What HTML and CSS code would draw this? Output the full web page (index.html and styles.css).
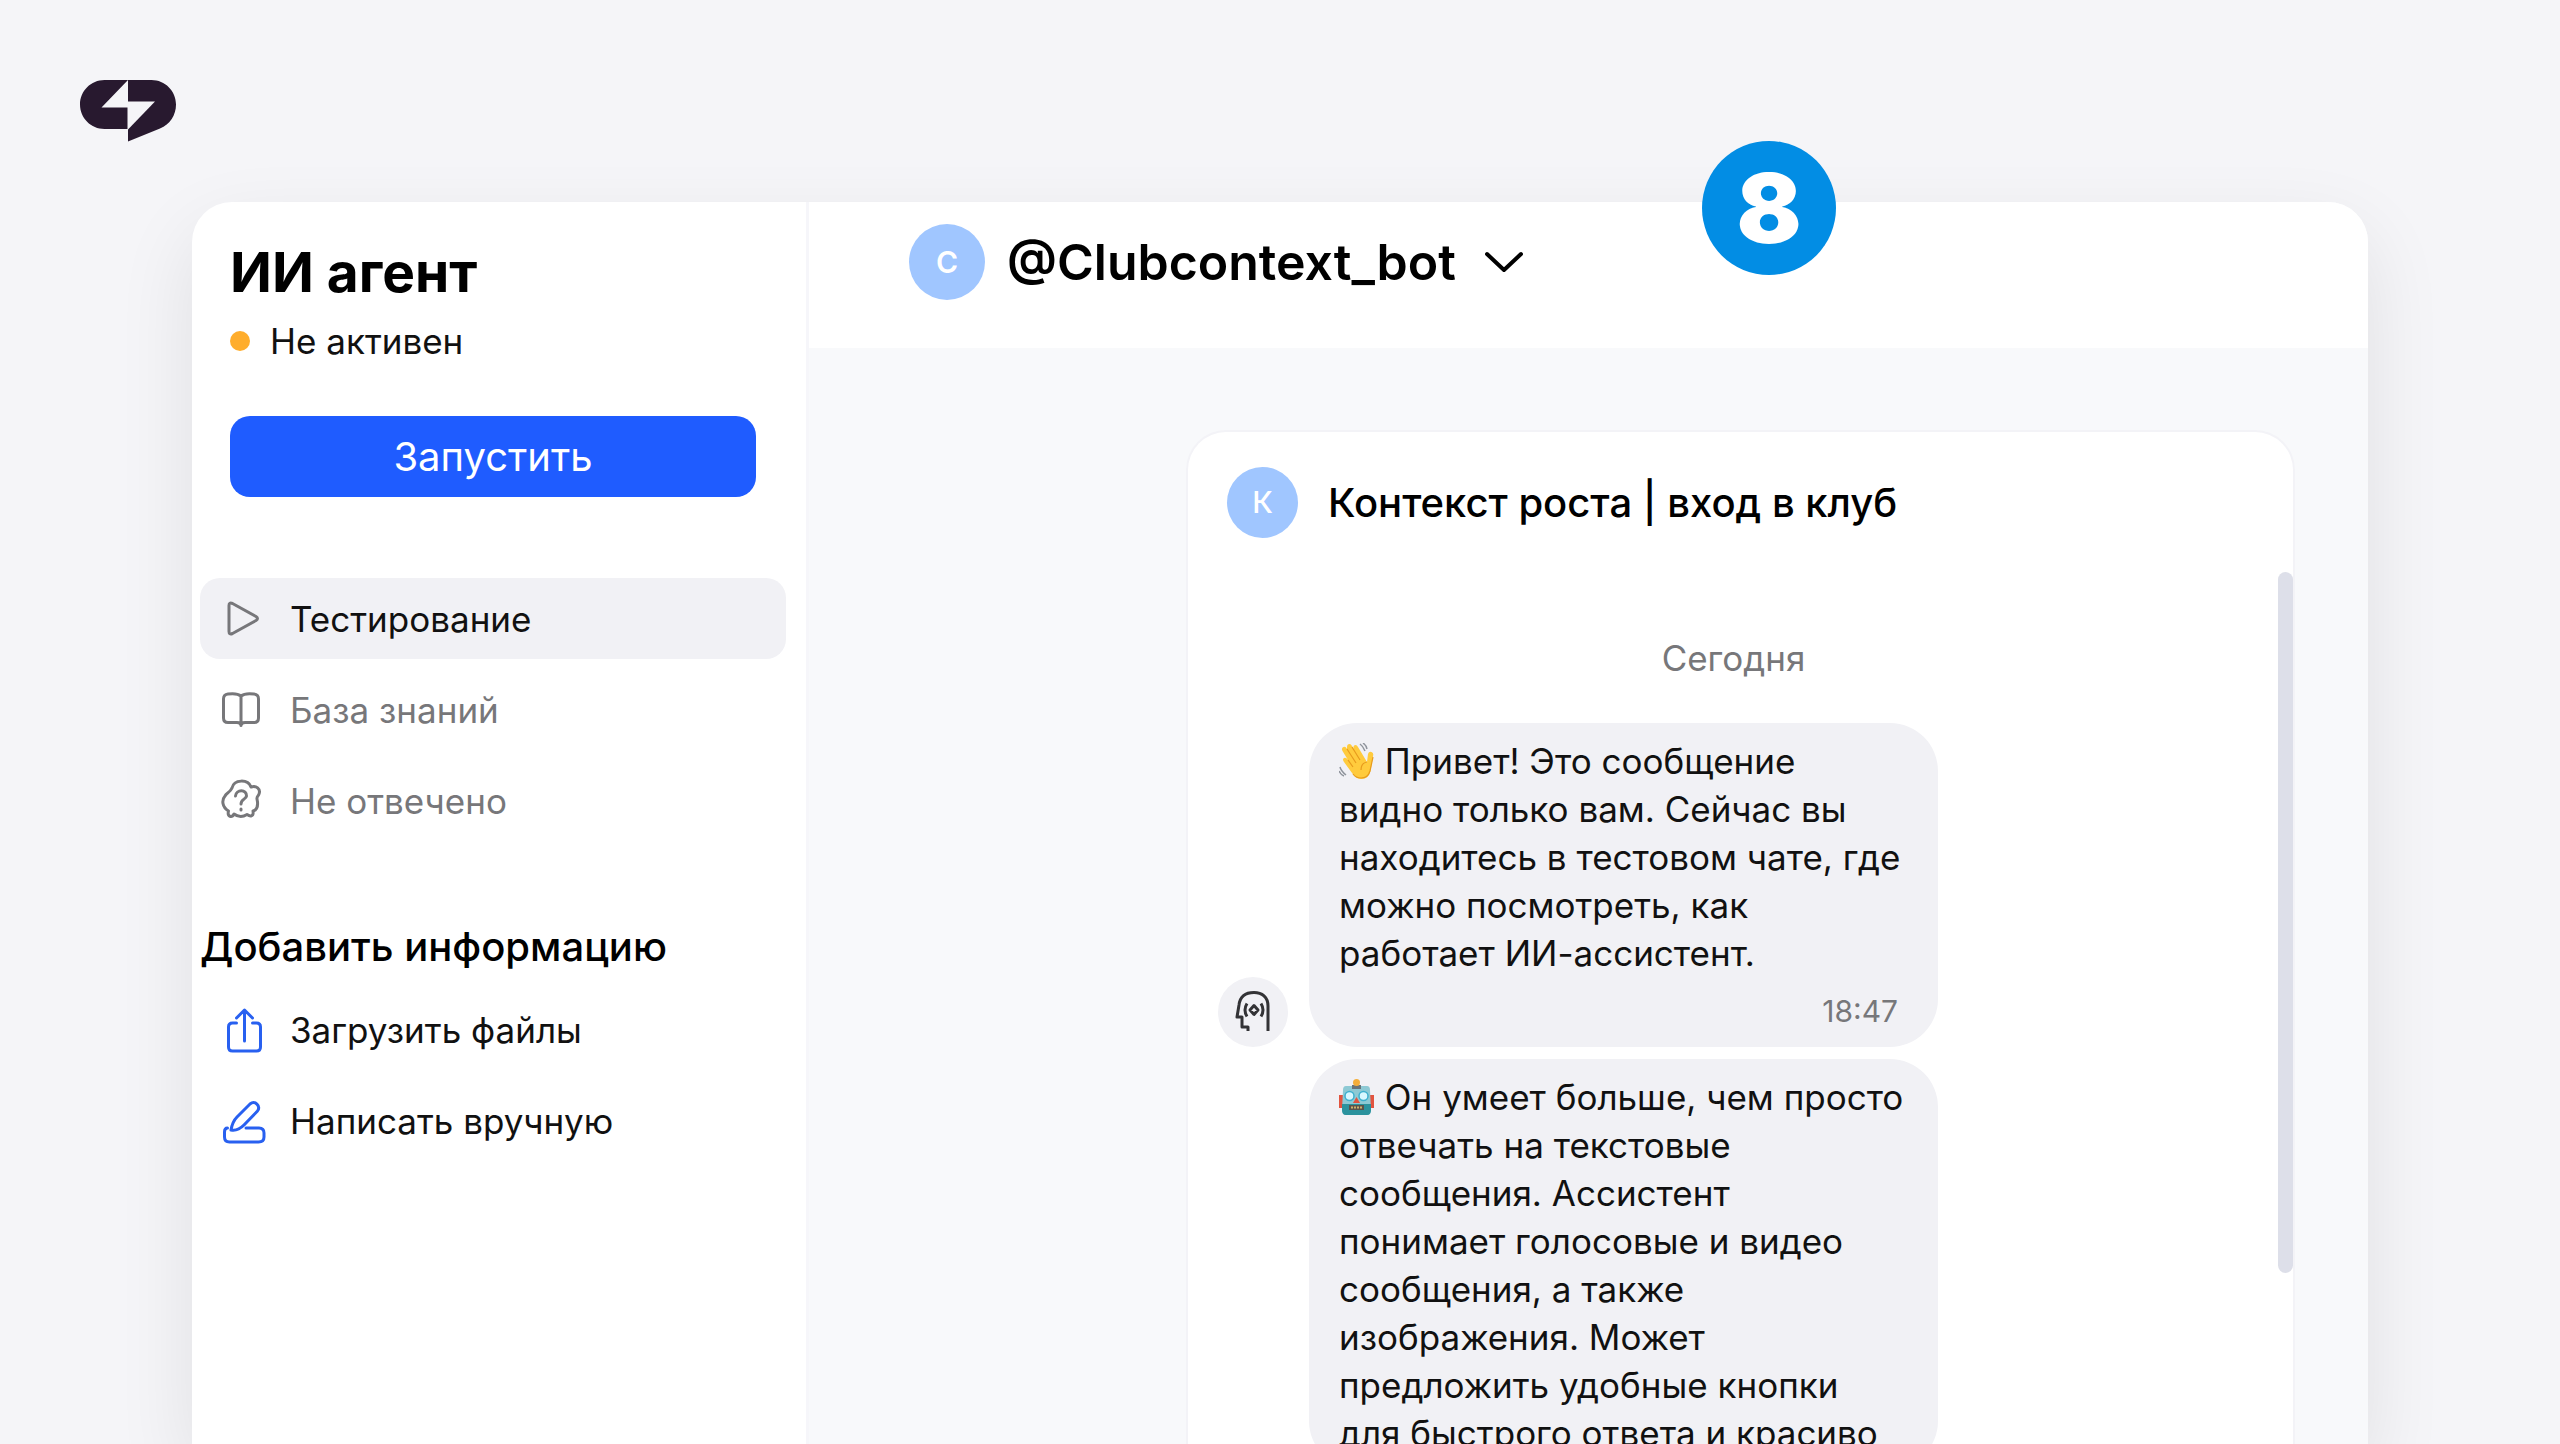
FILE: index.html
```html
<!DOCTYPE html>
<html lang="ru">
<head>
    <meta charset="UTF-8">
    <meta name="viewport" content="width=device-width, initial-scale=1.0">
    <title>ИИ агент</title>
    <link rel="stylesheet" href="styles.css">
</head>
<body>
    <header class="brand">
        <svg class="logo" viewBox="0 0 96 62" role="img" aria-label="Логотип">
            <path fill="#28192f" d="M24.500 0H71.500C85 0 96 11 96 24.500C96 35 90 44.500 80 48.500L48 61.500V0L21.500 27.500H48V49H24.500C11 49 0 38 0 24.500C0 11 11 0 24.500 0Z"/>
            <path fill="#f5f5f8" d="M47.500 21.500H75L48 49.500L47.500 49.500Z"/>
        </svg>
    </header>

    <div class="window">
        <span class="step-badge">8</span>

        <aside class="sidebar">
            <div class="agent">
                <h1>ИИ агент</h1>
                <p class="status">Не активен</p>
                <button class="start-btn" type="button">Запустить</button>
            </div>

            <nav class="menu">
                <a class="menu-item active" href="#">
                    <svg class="icon" viewBox="0 0 44 44"><path d="M9 8.500Q9 5 12.500 6.500L36 19.500Q39 21.500 36 23.500L12.500 36.500Q9 38 9 34.500Z"/></svg>
                    Тестирование
                </a>
                <a class="menu-item" href="#">
                    <svg class="icon" viewBox="0 0 44 44"><path d="M21 8C18 5.500 12 5.500 8 6Q3.500 6.500 3.500 11V30Q3.500 34.500 8 34.500H17Q21 34.500 21 37.500Q21 34.500 25 34.500H34Q38.500 34.500 38.500 30V11Q38.500 6.500 34 6C30 5.500 24 5.500 21 8V37"/></svg>
                    База знаний
                </a>
                <a class="menu-item" href="#">
                    <svg class="icon" viewBox="0 0 44 44">
                        <path d="M12 9C14 0 28 0 31 8C36 6 41 10 39 15C38.500 17 36.500 17.500 37 20C38.500 27 37 31 33 32C34 38 30 37.500 27 35.500C23 38 18 38 14 35C12 39 7 38 8.500 32C2 28 1.500 21 5 17C6.500 14 10 13.500 12 9Z"/>
                        <path d="M15.500 17C16 10 27 10 26.500 17C26 20.500 21 20 21 25M21 30V31"/>
                    </svg>
                    Не отвечено
                </a>
            </nav>

            <section class="add-info">
                <h2>Добавить информацию</h2>
                <a class="menu-item add" href="#">
                    <svg class="icon" viewBox="-1 -2 44 46"><path d="M15.500 14H11.500Q7.500 14 7.500 18V38Q7.500 42 11.500 42H35.500Q39.500 42 39.500 38V18Q39.500 14 35.500 14H31.500M23.500 32V1M15.500 9L23.500 1L31.500 9"/></svg>
                    Загрузить файлы
                </a>
                <a class="menu-item add" href="#">
                    <svg class="icon" viewBox="-1 -3 44 46"><path d="M10 29C11 23 13 19 16 16L29 3C34 -1 40 5 36.500 10L23 24C19 28 15 30 10 29ZM6.500 27Q3.500 27 3.500 31V36Q3.500 41 8.500 41H37.500Q43 41 43 36V32Q43 27 38 27H25"/></svg>
                    Написать вручную
                </a>
            </section>
        </aside>

        <main class="content">
            <div class="topbar">
                <span class="avatar">C</span>
                <label class="bot-picker">
                    <select class="bot-select" aria-label="Бот">
                        <option>@Clubcontext_bot</option>
                    </select>
                    <svg class="chevron" viewBox="0 0 40 24"><path d="M3 4L20 20L37 4"/></svg>
                </label>
            </div>

            <section class="chat">
                <div class="chat-head">
                    <span class="avatar small">К</span>
                    <h2>Контекст роста | вход в клуб</h2>
                </div>
                <p class="day">Сегодня</p>

                <div class="message">
                    <span class="bot-icon">
                        <svg viewBox="0 0 36 42">
                            <path d="M33 40V15C33 6 27 1.500 19 1.500C10 1.500 5 6 4 14L2 26H7V36H13V40"/>
                            <path d="M12 12.500Q8 19 12 25.500M26 12.500Q30 19 26 25.500M19 14.500L23 19L19 23.500L15 19Z"/>
                        </svg>
                    </span>
                    <div class="bubble">
                        <p><svg class="emoji" viewBox="0 0 36 36" role="img" aria-label="Машет рукой">
                            <path fill="#ffcb3d" d="M14.500 32L5 19Q3 16 5 15Q7 14 9 17L3.500 8Q2 5 4.500 4Q6.500 3 8 6L8 4Q8 1 10.500 1Q12 1 13 3L14.500 6Q14 2 16.500 2Q18 2 19 4L28 19L29 11Q30 8 32.500 9Q35 10 34 13L31.500 28Q30 35 23 36Q17 36 14.500 32Z"/>
                            <path fill="none" stroke="#e79b1d" stroke-width="1.200" d="M8 6L17 20M13 4L21 17M9 17L14 24M28 19Q22 20 22 27M34 14L31 28Q29 35 22 35Q17 35 14 31"/>
                            <path fill="none" stroke="#8f949c" stroke-width="1.500" d="M21 1Q24 3 26 8M24 0Q27 2 28 6M1 24Q2 28 7 32M0 28Q2 32 5 33"/>
                        </svg> Привет! Это сообщение видно только вам. Сейчас вы находитесь в тестовом чате, где можно посмотреть, как работает ИИ-ассистент.</p>
                        <time>18:47</time>
                    </div>
                </div>

                <div class="message">
                    <div class="bubble">
                        <p><svg class="emoji" viewBox="0 0 36 36" role="img" aria-label="Робот">
                            <path fill="#e2543f" d="M0 16H5V29H0ZM30 16H35V29H30Z"/>
                            <path fill="#8dc9d4" d="M7 7H28Q31 7 31 11L32 31Q32 36 28 36H7Q3 36 3 31L4 11Q4 7 7 7Z"/>
                            <path fill="#2b929d" d="M3 25H32V31Q32 36 28 36H7Q3 36 3 31Z"/>
                            <path fill="#68747a" d="M13 6H22V10H13Z"/>
                            <circle cx="17.500" cy="3.500" r="3.500" fill="#f4ae3b"/>
                            <circle cx="10.500" cy="17" r="4.500" fill="#d8f7ff" stroke="#3eafce" stroke-width="1.500"/>
                            <circle cx="24.500" cy="17" r="4.500" fill="#d8f7ff" stroke="#3eafce" stroke-width="1.500"/>
                            <path fill="#e0533f" d="M17.500 18L21 24H14Z"/>
                            <path fill="#59534c" d="M10 26H25V31H10Z"/>
                            <path stroke="#cbb26c" stroke-width="2" stroke-dasharray="2 1" d="M12 28.500H23"/>
                        </svg> Он умеет больше, чем просто отвечать на текстовые сообщения. Ассистент<br>понимает голосовые и видео сообщения, а также<br>изображения. Может предложить удобные кнопки для быстрого ответа и красиво</p>
                    </div>
                </div>

                <span class="scrollbar"></span>
            </section>
        </main>
    </div>
</body>
</html>
```

FILE: styles.css
```css
* {
    box-sizing: border-box;
}
body {
    display: flex;
    flex-direction: column;
    height: 100vh;
    margin: 0;
    padding: 0 192px;
    overflow: hidden;
    background-color: #f5f5f8;
    color: #111;
    font-family: Inter, "Noto Sans", sans-serif;
    font-size: 35px;
    line-height: 48px;
}
h1, h2, p {
    margin: 0;
}
a {
    color: inherit;
    text-decoration: none;
}
.brand {
    flex: 0 0 202px;
    margin-left: -112px;
    padding-top: 80px;
}
.logo {
    display: block;
    width: 96px;
    height: 62px;
}
.window {
    position: relative;
    display: flex;
    flex: 1;
    min-height: 0;
    border-radius: 40px 40px 0 0;
    background-color: #fff;
    box-shadow: 0 30px 80px rgba(0, 0, 0, 0.09);
}
.step-badge {
    position: absolute;
    top: -61px;
    right: 532px;
    width: 134px;
    height: 134px;
    border-radius: 50%;
    background-color: #028de4;
    color: #fff;
    font-size: 96px;
    font-weight: 900;
    line-height: 134px;
    text-align: center;
}

/* Sidebar */
.sidebar {
    flex: 0 0 617px;
    padding: 40px 20px 0 8px;
    border-right: 3px solid #f6f6fa;
}
.agent {
    padding: 0 30px;
}
h1 {
    color: #000;
    font-size: 55px;
    line-height: 60px;
}
.status {
    display: flex;
    align-items: center;
    gap: 20px;
    margin-top: 15px;
}
.status::before {
    content: "";
    width: 20px;
    height: 20px;
    border-radius: 50%;
    background-color: #ffad2c;
}
.start-btn {
    width: 100%;
    height: 81px;
    margin-top: 51px;
    border: none;
    border-radius: 20px;
    background-color: #1f5cff;
    color: #fff;
    font-family: inherit;
    font-size: 40px;
    cursor: pointer;
}
.menu {
    display: flex;
    flex-direction: column;
    gap: 10px;
    margin-top: 81px;
}
.menu-item {
    display: flex;
    align-items: center;
    gap: 26px;
    height: 81px;
    padding-left: 20px;
    border-radius: 20px;
    color: #77777a;
}
.menu-item.active {
    background-color: #f1f1f5;
    color: #111;
}
.icon {
    width: 44px;
    height: 46px;
    overflow: visible;
    fill: none;
    stroke: #77777a;
    stroke-width: 3;
    stroke-linecap: round;
    stroke-linejoin: round;
}
.add-info {
    display: flex;
    flex-direction: column;
    gap: 10px;
    margin-top: 82px;
}
h2 {
    color: #000;
    font-size: 40px;
    font-weight: 500;
}
.menu-item.add {
    color: #111;
}
.add-info h2 + .menu-item {
    margin-top: 8px;
}
.add .icon {
    stroke: #2860f0;
}

/* Right side */
.content {
    display: flex;
    flex: 1;
    flex-direction: column;
    min-width: 0;
    background-color: #f8f9fb;
    border-top-right-radius: 40px;
}
.topbar {
    display: flex;
    flex: 0 0 146px;
    align-items: flex-start;
    gap: 22px;
    padding: 22px 100px;
    border-top-right-radius: 40px;
    background-color: #fff;
}
.avatar {
    width: 76px;
    height: 76px;
    border-radius: 50%;
    background-color: #a0c6ff;
    color: #fff;
    font-size: 30px;
    font-weight: 600;
    line-height: 76px;
    text-align: center;
}
.avatar.small {
    width: 71px;
    height: 71px;
    font-weight: 500;
    line-height: 71px;
}
.bot-picker {
    display: flex;
    align-items: center;
    height: 76px;
}
.bot-select {
    margin-right: -40px;
    padding: 0 68px 0 0;
    border: none;
    background: none;
    appearance: none;
    color: #000;
    font-family: inherit;
    font-size: 50px;
    font-weight: 600;
}
.chevron {
    width: 40px;
    height: 24px;
    fill: none;
    stroke: #000;
    stroke-width: 4;
    stroke-linecap: round;
    stroke-linejoin: round;
    pointer-events: none;
}

/* Chat */
.chat {
    position: relative;
    display: flex;
    flex: 1;
    flex-direction: column;
    gap: 12px;
    min-height: 0;
    margin: 82px 73px 0 377px;
    padding: 35px 30px 0;
    border: 2px solid #f3f3f7;
    border-bottom: none;
    border-radius: 40px 40px 0 0;
    background-color: #fff;
}
.chat-head {
    display: flex;
    align-items: center;
    gap: 30px;
    padding-left: 9px;
}
.day {
    margin: 84px 0 29px;
    padding-right: 14px;
    color: #77777a;
    text-align: center;
}
.message {
    display: flex;
    align-items: flex-end;
    width: 720px;
}
.bot-icon {
    display: flex;
    align-items: center;
    justify-content: center;
    width: 70px;
    height: 70px;
    border-radius: 50%;
    background-color: #f1f1f5;
}
.bot-icon svg {
    width: 36px;
    height: 42px;
    fill: none;
    stroke: #333336;
    stroke-width: 3;
    stroke-linejoin: round;
}
.bubble {
    width: 629px;
    margin-left: auto;
    padding: 14px 32px 12px 30px;
    border-radius: 48px;
    background-color: #f1f1f5;
}
.bubble time {
    display: block;
    margin-top: 10px;
    padding-right: 8px;
    color: #77777a;
    font-size: 30px;
    text-align: right;
}
.emoji {
    width: 36px;
    height: 36px;
    vertical-align: -5px;
}
.scrollbar {
    position: absolute;
    top: 140px;
    right: 0;
    width: 15px;
    height: 701px;
    border-radius: 8px;
    background-color: #dddfe9;
}
```
